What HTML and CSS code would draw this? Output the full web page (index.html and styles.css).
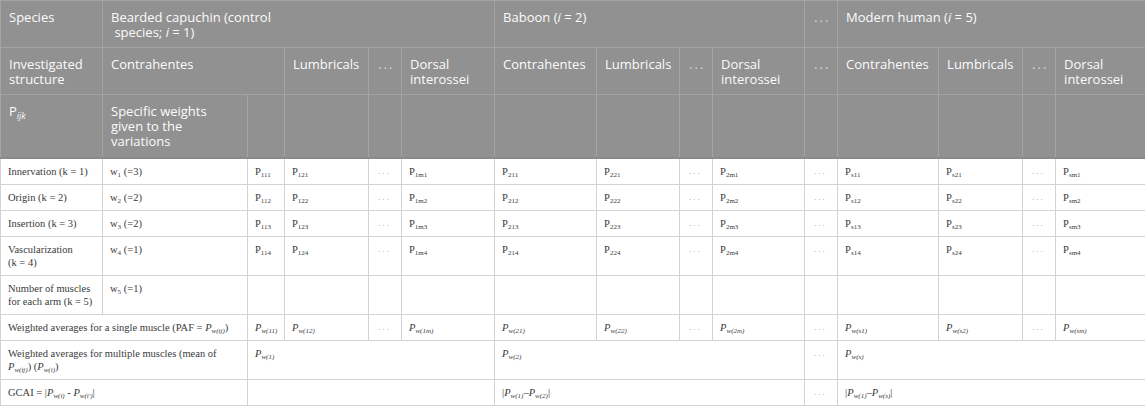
FILE: index.html
```html
<!DOCTYPE html>
<html>
<head>
<meta charset="utf-8">
<link rel="stylesheet" href="styles.css">
</head>
<body>
<table class="t">
  <colgroup>
    <col class="c0"><col class="c1"><col class="c2"><col class="c3"><col class="c4">
    <col class="c5"><col class="c6"><col class="c7"><col class="c8"><col class="c9">
    <col class="c10"><col class="c11"><col class="c12"><col class="c13"><col class="c14">
  </colgroup>
  <thead>
    <tr>
      <th>Species</th>
      <th colspan="5">Bearded capuchin (control<br>&nbsp;species; <i>i</i> = 1)</th>
      <th colspan="4">Baboon (<i>i</i> = 2)</th>
      <th class="dots">...</th>
      <th colspan="4">Modern human (<i>i</i> = 5)</th>
    </tr>
    <tr>
      <th>Investigated structure</th>
      <th colspan="2">Contrahentes</th>
      <th>Lumbricals</th>
      <th class="dots">...</th>
      <th>Dorsal interossei</th>
      <th>Contrahentes</th>
      <th>Lumbricals</th>
      <th class="dots">...</th>
      <th>Dorsal interossei</th>
      <th class="dots">...</th>
      <th>Contrahentes</th>
      <th>Lumbricals</th>
      <th class="dots">...</th>
      <th>Dorsal interossei</th>
    </tr>
    <tr class="last">
      <th>P<sub class="hs"><i>ijk</i></sub></th>
      <th>Specific weights given to the variations</th>
      <th></th><th></th><th></th><th></th><th></th><th></th><th></th><th></th><th></th><th></th><th></th><th></th><th></th>
    </tr>
  </thead>
  <tbody>
    <tr>
      <td>Innervation (k&nbsp;=&nbsp;1)</td><td>w<sub>1</sub> (=3)</td>
      <td>P<sub>111</sub></td><td>P<sub>121</sub></td><td class="dots">...</td><td>P<sub>1m1</sub></td>
      <td>P<sub>211</sub></td><td>P<sub>221</sub></td><td class="dots">...</td><td>P<sub>2m1</sub></td>
      <td class="dots">...</td>
      <td>P<sub>s11</sub></td><td>P<sub>s21</sub></td><td class="dots">...</td><td>P<sub>sm1</sub></td>
    </tr>
    <tr>
      <td>Origin (k&nbsp;=&nbsp;2)</td><td>w<sub>2</sub> (=2)</td>
      <td>P<sub>112</sub></td><td>P<sub>122</sub></td><td class="dots">...</td><td>P<sub>1m2</sub></td>
      <td>P<sub>212</sub></td><td>P<sub>222</sub></td><td class="dots">...</td><td>P<sub>2m2</sub></td>
      <td class="dots">...</td>
      <td>P<sub>s12</sub></td><td>P<sub>s22</sub></td><td class="dots">...</td><td>P<sub>sm2</sub></td>
    </tr>
    <tr>
      <td>Insertion (k&nbsp;=&nbsp;3)</td><td>w<sub>3</sub> (=2)</td>
      <td>P<sub>113</sub></td><td>P<sub>123</sub></td><td class="dots">...</td><td>P<sub>1m3</sub></td>
      <td>P<sub>213</sub></td><td>P<sub>223</sub></td><td class="dots">...</td><td>P<sub>2m3</sub></td>
      <td class="dots">...</td>
      <td>P<sub>s13</sub></td><td>P<sub>s23</sub></td><td class="dots">...</td><td>P<sub>sm3</sub></td>
    </tr>
    <tr>
      <td>Vascularization (k&nbsp;=&nbsp;4)</td><td>w<sub>4</sub> (=1)</td>
      <td>P<sub>114</sub></td><td>P<sub>124</sub></td><td class="dots">...</td><td>P<sub>1m4</sub></td>
      <td>P<sub>214</sub></td><td>P<sub>224</sub></td><td class="dots">...</td><td>P<sub>2m4</sub></td>
      <td class="dots">...</td>
      <td>P<sub>s14</sub></td><td>P<sub>s24</sub></td><td class="dots">...</td><td>P<sub>sm4</sub></td>
    </tr>
    <tr>
      <td>Number of muscles for each arm (k&nbsp;=&nbsp;5)</td><td>w<sub>5</sub> (=1)</td>
      <td></td><td></td><td></td><td></td><td></td><td></td><td></td><td></td><td></td><td></td><td></td><td></td><td></td>
    </tr>
    <tr>
      <td colspan="2">Weighted averages for a single muscle (PAF = <i>P</i><sub><i>w(ij)</i></sub>)</td>
      <td><i>P</i><sub><i>w(11)</i></sub></td><td><i>P</i><sub><i>w(12)</i></sub></td><td class="dots">...</td><td><i>P</i><sub><i>w(1m)</i></sub></td>
      <td><i>P</i><sub><i>w(21)</i></sub></td><td><i>P</i><sub><i>w(22)</i></sub></td><td class="dots">...</td><td><i>P</i><sub><i>w(2m)</i></sub></td>
      <td class="dots">...</td>
      <td><i>P</i><sub><i>w(s1)</i></sub></td><td><i>P</i><sub><i>w(s2)</i></sub></td><td class="dots">...</td><td><i>P</i><sub><i>w(sm)</i></sub></td>
    </tr>
    <tr>
      <td colspan="2">Weighted averages for multiple muscles (mean of <i>P</i><sub><i>w(ij)</i></sub>) (<i>P</i><sub><i>w(i)</i></sub>)</td>
      <td colspan="4"><i>P</i><sub><i>w(1)</i></sub></td>
      <td colspan="4"><i>P</i><sub><i>w(2)</i></sub></td>
      <td class="dots">...</td>
      <td colspan="4"><i>P</i><sub><i>w(s)</i></sub></td>
    </tr>
    <tr>
      <td colspan="2">GCAI = |<i>P</i><sub><i>w(i)</i></sub> - <i>P</i><sub><i>w(i')</i></sub>|</td>
      <td colspan="4"></td>
      <td colspan="4">|<i>P</i><sub><i>w(1)</i></sub>–<i>P</i><sub><i>w(2)</i></sub>|</td>
      <td class="dots">...</td>
      <td colspan="4">|<i>P</i><sub><i>w(1)</i></sub>–<i>P</i><sub><i>w(s)</i></sub>|</td>
    </tr>
  </tbody>
</table>
</body>
</html>
```
FILE: styles.css
```css
html, body {
  margin: 0;
  padding: 0;
  background: #ffffff;
}

.t {
  width: 1145px;
  table-layout: fixed;
  border-collapse: collapse;
}

.c0 { width: 102px; }
.c1 { width: 145px; }
.c2 { width: 37px; }
.c3 { width: 84px; }
.c4 { width: 33px; }
.c5 { width: 93px; }
.c6 { width: 102px; }
.c7 { width: 83px; }
.c8 { width: 33px; }
.c9 { width: 92px; }
.c10 { width: 33px; }
.c11 { width: 101px; }
.c12 { width: 84px; }
.c13 { width: 33px; }
.c14 { width: 90px; }

th {
  background: #919191;
  color: #fbfbfb;
  font-family: "Open Sans", Lato, sans-serif;
  font-weight: 400;
  font-size: 13px;
  line-height: 15px;
  text-align: left;
  vertical-align: top;
  padding: 9px 8px 7px 8px;
  border: 1px solid #a4a4a4;
  overflow: hidden;
}

thead tr.last th {
  padding-bottom: 8px;
  border-bottom: 2px solid #8a8a8a;
}

th.dots {
  color: #d6d6d6;
  letter-spacing: 2px;
  padding-left: 9px;
  padding-right: 4px;
}

.hs {
  font-size: 9px;
  vertical-align: -3px;
  line-height: 0;
}

td {
  font-family: "Liberation Serif", "Times New Roman", serif;
  font-size: 10.5px;
  line-height: 13px;
  color: #3a3a3a;
  text-align: left;
  vertical-align: top;
  padding: 6px 7px 6px 7px;
  border: 1px solid #d2d2d2;
  overflow: hidden;
}

td sub {
  font-size: 7px;
  line-height: 0;
  vertical-align: -2px;
}

td.dots {
  color: #9a9a9a;
  font-size: 9px;
  letter-spacing: 2px;
  padding-left: 9px;
  padding-right: 3px;
}
```
